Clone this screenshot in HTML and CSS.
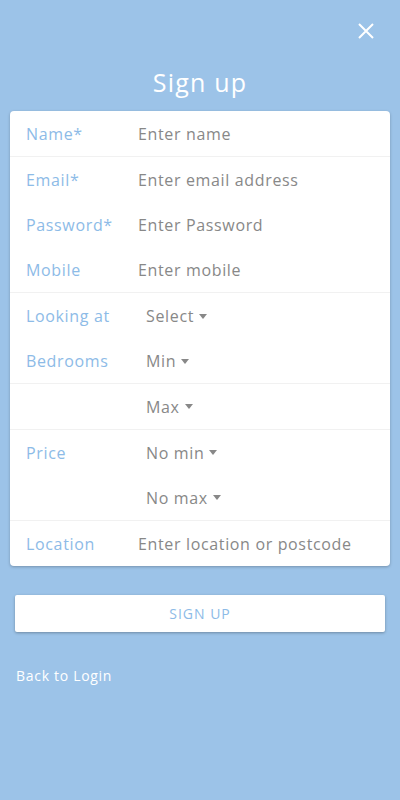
FILE: index.html
```html
<!DOCTYPE html>
<html lang="en">
<head>
    <meta charset="UTF-8">
    <title>Sign up</title>
    <link rel="stylesheet" href="styles.css">
</head>
<body>
<div id="page">
    <div class="topbar">
        <span class="close">
            <svg width="16" height="16" viewBox="0 0 16 16">
                <path d="M1 1L15 15M15 1L1 15" stroke="#fff" stroke-width="2"/>
            </svg>
        </span>
    </div>
    <h1 class="title">Sign up</h1>
    <div class="card">
        <div class="row line">
            <span class="label">Name*</span>
            <span class="field">Enter name</span>
        </div>
        <div class="row">
            <span class="label">Email*</span>
            <span class="field">Enter email address</span>
        </div>
        <div class="row">
            <span class="label">Password*</span>
            <span class="field">Enter Password</span>
        </div>
        <div class="row line">
            <span class="label">Mobile</span>
            <span class="field">Enter mobile</span>
        </div>
        <div class="row">
            <span class="label">Looking at</span>
            <span class="select">Select<i class="caret"></i></span>
        </div>
        <div class="row line">
            <span class="label">Bedrooms</span>
            <span class="select">Min<i class="caret"></i></span>
        </div>
        <div class="row line">
            <span class="label"></span>
            <span class="select">Max<i class="caret"></i></span>
        </div>
        <div class="row">
            <span class="label">Price</span>
            <span class="select">No min<i class="caret"></i></span>
        </div>
        <div class="row line">
            <span class="label"></span>
            <span class="select">No max<i class="caret"></i></span>
        </div>
        <div class="row">
            <span class="label">Location</span>
            <span class="field">Enter location or postcode</span>
        </div>
    </div>
    <div class="btn">SIGN UP</div>
    <a class="back">Back to Login</a>
</div>
</body>
</html>
```

FILE: styles.css
```css
*{
    padding: 0;
    margin: 0;
    box-sizing: border-box;
}
body{
    background-color: #9cc3e8;
    font-family: "Open Sans", sans-serif;
    height: 800px;
}
#page{
    padding: 0 10px;
}
.topbar{
    height: 61px;
    display: flex;
    justify-content: flex-end;
    align-items: center;
    padding-right: 16px;
}
.close{
    display: flex;
}
.title{
    text-align: center;
    font-weight: 400;
    font-size: 25px;
    letter-spacing: 1.2px;
    color: #fff;
    height: 50px;
    line-height: 42px;
}
.card{
    background: #fff;
    border-radius: 4px;
    box-shadow: 0 1px 3px rgba(0, 0, 0, .25);
}
.row{
    display: flex;
    align-items: center;
    height: 45.5px;
    padding-left: 16px;
    font-size: 16px;
    letter-spacing: .65px;
    padding-top: 1px;
}
.row.line{
    border-bottom: 1px solid #f1f1f1;
}
.label{
    width: 112px;
    color: #8dbbe7;
}
.field{
    color: #888;
}
.select{
    color: #888;
    padding-left: 8px;
    display: flex;
    align-items: center;
}
.caret{
    margin-left: 5px;
    border-left: 4.5px solid transparent;
    border-right: 4.5px solid transparent;
    border-top: 5px solid #888;
}
.btn{
    margin: 29px 5px 0;
    height: 37px;
    background: #fff;
    border-radius: 2px;
    box-shadow: 0 1px 3px rgba(0, 0, 0, .3);
    color: #8dbbe7;
    font-size: 14px;
    letter-spacing: 1px;
    text-align: center;
    line-height: 37px;
}
.back{
    display: block;
    margin: 34px 0 0 6px;
    color: #fff;
    font-size: 14px;
    letter-spacing: .7px;
}
```
